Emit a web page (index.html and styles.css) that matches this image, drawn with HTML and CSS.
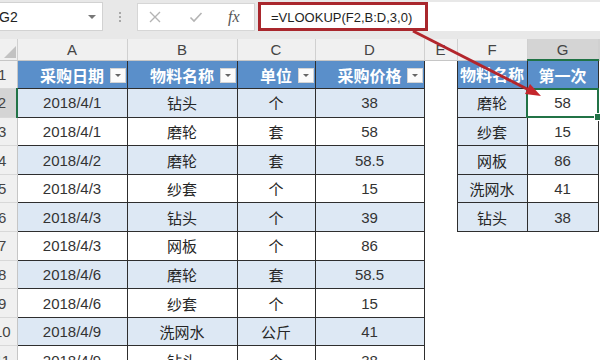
FILE: index.html
```html
<!DOCTYPE html>
<html lang="zh-CN">
<head>
  <meta charset="UTF-8">
  <title>VLOOKUP 第一次采购价格</title>
  <link rel="stylesheet" href="styles.css">
</head>
<body>
  <div class="excel">
    <div class="toolbar">
      <div class="namebox"><span>G2</span><i class="caret"></i></div>
      <div class="grip"><i></i><i></i><i></i></div>
      <div class="fx-buttons">
        <svg class="ico-x" width="14" height="14" viewBox="0 0 14 14"><path d="M2 2 L12 12 M12 2 L2 12" stroke="#b4b4b4" stroke-width="1.4" fill="none"/></svg>
        <svg class="ico-ok" width="14" height="14" viewBox="0 0 14 14"><path d="M1.5 7.5 L5 11 L12.5 3" stroke="#b4b4b4" stroke-width="1.6" fill="none"/></svg>
        <span class="fx">fx</span>
      </div>
      <div class="formula"><span class="formula-text">=VLOOKUP(F2,B:D,3,0)</span></div>
    </div>

    <table class="grid">
      <colgroup>
        <col style="width:29px"><col style="width:110px"><col style="width:110px"><col style="width:78px">
        <col style="width:109px"><col style="width:33px"><col style="width:70px"><col style="width:71px"><col>
      </colgroup>
      <tr class="colhead">
        <th class="corner"><i class="tri"></i></th>
        <th>A</th><th>B</th><th>C</th><th>D</th><th>E</th><th>F</th><th class="sel">G</th><th></th>
      </tr>
      <tr>
        <th class="rowhead">1</th>
        <td class="t hd"><div class="head"><span>采购日期</span><b class="filter"></b></div></td>
        <td class="t hd"><div class="head"><span>物料名称</span><b class="filter"></b></div></td>
        <td class="t hd"><div class="head"><span>单位</span><b class="filter"></b></div></td>
        <td class="t hd"><div class="head"><span>采购价格</span><b class="filter"></b></div></td>
        <td></td>
        <td class="t hd">物料名称</td>
        <td class="t hd">第一次</td>
        <td></td>
      </tr>
      <tr class="alt">
        <th class="rowhead sel">2</th>
        <td class="t n">2018/4/1</td><td class="t">钻头</td><td class="t">个</td><td class="t n">38</td>
        <td></td><td class="t key">磨轮</td><td class="t n cur">58</td><td></td>
      </tr>
      <tr>
        <th class="rowhead">3</th>
        <td class="t n">2018/4/1</td><td class="t">磨轮</td><td class="t">套</td><td class="t n">58</td>
        <td></td><td class="t key">纱套</td><td class="t n">15</td><td></td>
      </tr>
      <tr class="alt">
        <th class="rowhead">4</th>
        <td class="t n">2018/4/2</td><td class="t">磨轮</td><td class="t">套</td><td class="t n">58.5</td>
        <td></td><td class="t key">网板</td><td class="t n">86</td><td></td>
      </tr>
      <tr>
        <th class="rowhead">5</th>
        <td class="t n">2018/4/3</td><td class="t">纱套</td><td class="t">个</td><td class="t n">15</td>
        <td></td><td class="t key">洗网水</td><td class="t n">41</td><td></td>
      </tr>
      <tr class="alt">
        <th class="rowhead">6</th>
        <td class="t n">2018/4/3</td><td class="t">钻头</td><td class="t">个</td><td class="t n">39</td>
        <td></td><td class="t key">钻头</td><td class="t n">38</td><td></td>
      </tr>
      <tr>
        <th class="rowhead">7</th>
        <td class="t n">2018/4/3</td><td class="t">网板</td><td class="t">个</td><td class="t n">86</td>
        <td></td><td></td><td></td><td></td>
      </tr>
      <tr class="alt">
        <th class="rowhead">8</th>
        <td class="t n">2018/4/6</td><td class="t">磨轮</td><td class="t">套</td><td class="t n">58.5</td>
        <td></td><td></td><td></td><td></td>
      </tr>
      <tr>
        <th class="rowhead">9</th>
        <td class="t n">2018/4/6</td><td class="t">纱套</td><td class="t">个</td><td class="t n">15</td>
        <td></td><td></td><td></td><td></td>
      </tr>
      <tr class="alt">
        <th class="rowhead">10</th>
        <td class="t n">2018/4/9</td><td class="t">洗网水</td><td class="t">公斤</td><td class="t n">41</td>
        <td></td><td></td><td></td><td></td>
      </tr>
      <tr>
        <th class="rowhead">11</th>
        <td class="t n">2018/4/9</td><td class="t">钻头</td><td class="t">个</td><td class="t n">38</td>
        <td></td><td></td><td></td><td></td>
      </tr>
    </table>
  </div>

  <!-- red annotation arrow from the formula to G2 -->
  <svg class="arrow" width="600" height="360" viewBox="0 0 600 360">
    <line x1="413" y1="31" x2="529" y2="90" stroke="#b3262c" stroke-width="3"/>
    <polygon points="541,96 525,94 530,84" fill="#c4262c"/>
  </svg>
</body>
</html>
```

FILE: styles.css
```css
* {
  box-sizing: border-box;
}

body {
  margin: 0;
  width: 600px;
  height: 360px;
  overflow: hidden;
  position: relative;
  background: #ffffff;
  color: #262626;
  font-family: "Liberation Sans", "Noto Sans CJK SC", sans-serif;
}

/* the capture is cropped a little on the left */
.excel {
  margin-left: -12px;
  width: 612px;
}

/* ---- formula bar ---- */
.toolbar {
  display: flex;
  align-items: flex-start;
  height: 39px;
  padding-top: 2px;
  background: #e8e8e8;
}

.namebox {
  width: 115px;
  height: 29px;
  display: flex;
  align-items: center;
  padding: 0 6px 0 10px;
  background: #ffffff;
  border: 1px solid #d2d2d2;
  font-size: 14px;
  color: #222;
}

.namebox span {
  flex: 1;
}

.caret {
  width: 0;
  height: 0;
  border-left: 4px solid transparent;
  border-right: 4px solid transparent;
  border-top: 4px solid #777;
}

.grip {
  width: 34px;
  height: 29px;
  display: flex;
  flex-direction: column;
  align-items: center;
  justify-content: center;
  gap: 2px;
}

.grip i {
  width: 2px;
  height: 2px;
  background: #a8a8a8;
}

.fx-buttons {
  width: 118px;
  height: 28px;
  margin-top: 1px;
  display: flex;
  align-items: center;
  padding-left: 10px;
  background: #ffffff;
  border: 1px solid #d6d6d6;
}

.ico-ok {
  margin-left: 27px;
}

.fx {
  margin-left: 25px;
  font: italic 16px "Liberation Serif", serif;
  color: #555;
}

.formula {
  flex: 1;
  height: 29px;
  margin-left: 3px;
  background: #ffffff;
}

.formula-text {
  display: block;
  width: 170px;
  height: 29px;
  padding: 5px 0 0 10px;
  border: 3px solid #a9272d;
  font-size: 13px;
  color: #1e1e1e;
}

/* ---- sheet ---- */
.grid {
  border-collapse: collapse;
  table-layout: fixed;
  width: 612px;
}

.grid th,
.grid td {
  padding: 0;
  overflow: hidden;
  white-space: nowrap;
  text-align: center;
}

.grid tr {
  height: 28.6px;
}

.grid tr.colhead {
  height: 21px;
}

.colhead th {
  background: #f0f0f0;
  border-right: 1px solid #d0d0d0;
  border-bottom: 1px solid #c6c6c6;
  font-weight: normal;
  font-size: 15px;
  color: #444;
}

.colhead th.sel {
  background: #d4d4d4;
  border-bottom: 2px solid #217346;
}

.corner {
  position: relative;
}

.tri {
  position: absolute;
  right: 1px;
  bottom: 2px;
  width: 0;
  height: 0;
  border-left: 12px solid transparent;
  border-bottom: 12px solid #c2c2c2;
}

.rowhead {
  background: #f0f0f0;
  border-right: 1px solid #c6c6c6;
  border-bottom: 1px solid #d8d8d8;
  font-weight: normal;
  font-size: 15px;
  color: #444;
}

.rowhead.sel {
  background: #d4d4d4;
  border-right: 2px solid #217346;
}

.t {
  border: 1px solid #2e2e2e;
  padding-top: 2px;
  font-size: 15px;
}

.n {
  color: #333;
}

.alt .t,
.t.key {
  background: #dde8f4;
}

.t.hd {
  background: #5a8fca;
  color: #ffffff;
  font-weight: bold;
  font-size: 16px;
}

.head {
  display: flex;
  align-items: center;
  padding: 2px 1px 0 17px;
}

.head span {
  flex: 1;
}

.filter {
  width: 16px;
  height: 15px;
  display: flex;
  align-items: center;
  justify-content: center;
  background: #fbfbfb;
  border: 1px solid #d4d4d4;
}

.filter::after {
  content: "";
  border-left: 3px solid transparent;
  border-right: 3px solid transparent;
  border-top: 3px solid #666;
}

.alt .t.cur {
  background: #ffffff;
  outline: 2px solid #217346;
  outline-offset: -1px;
  position: relative;
  overflow: visible;
}

.t.cur::after {
  content: "";
  position: absolute;
  right: -4px;
  bottom: -4px;
  width: 6px;
  height: 6px;
  background: #217346;
  border: 1px solid #ffffff;
}

.arrow {
  position: absolute;
  left: 0;
  top: 0;
  pointer-events: none;
}
```
